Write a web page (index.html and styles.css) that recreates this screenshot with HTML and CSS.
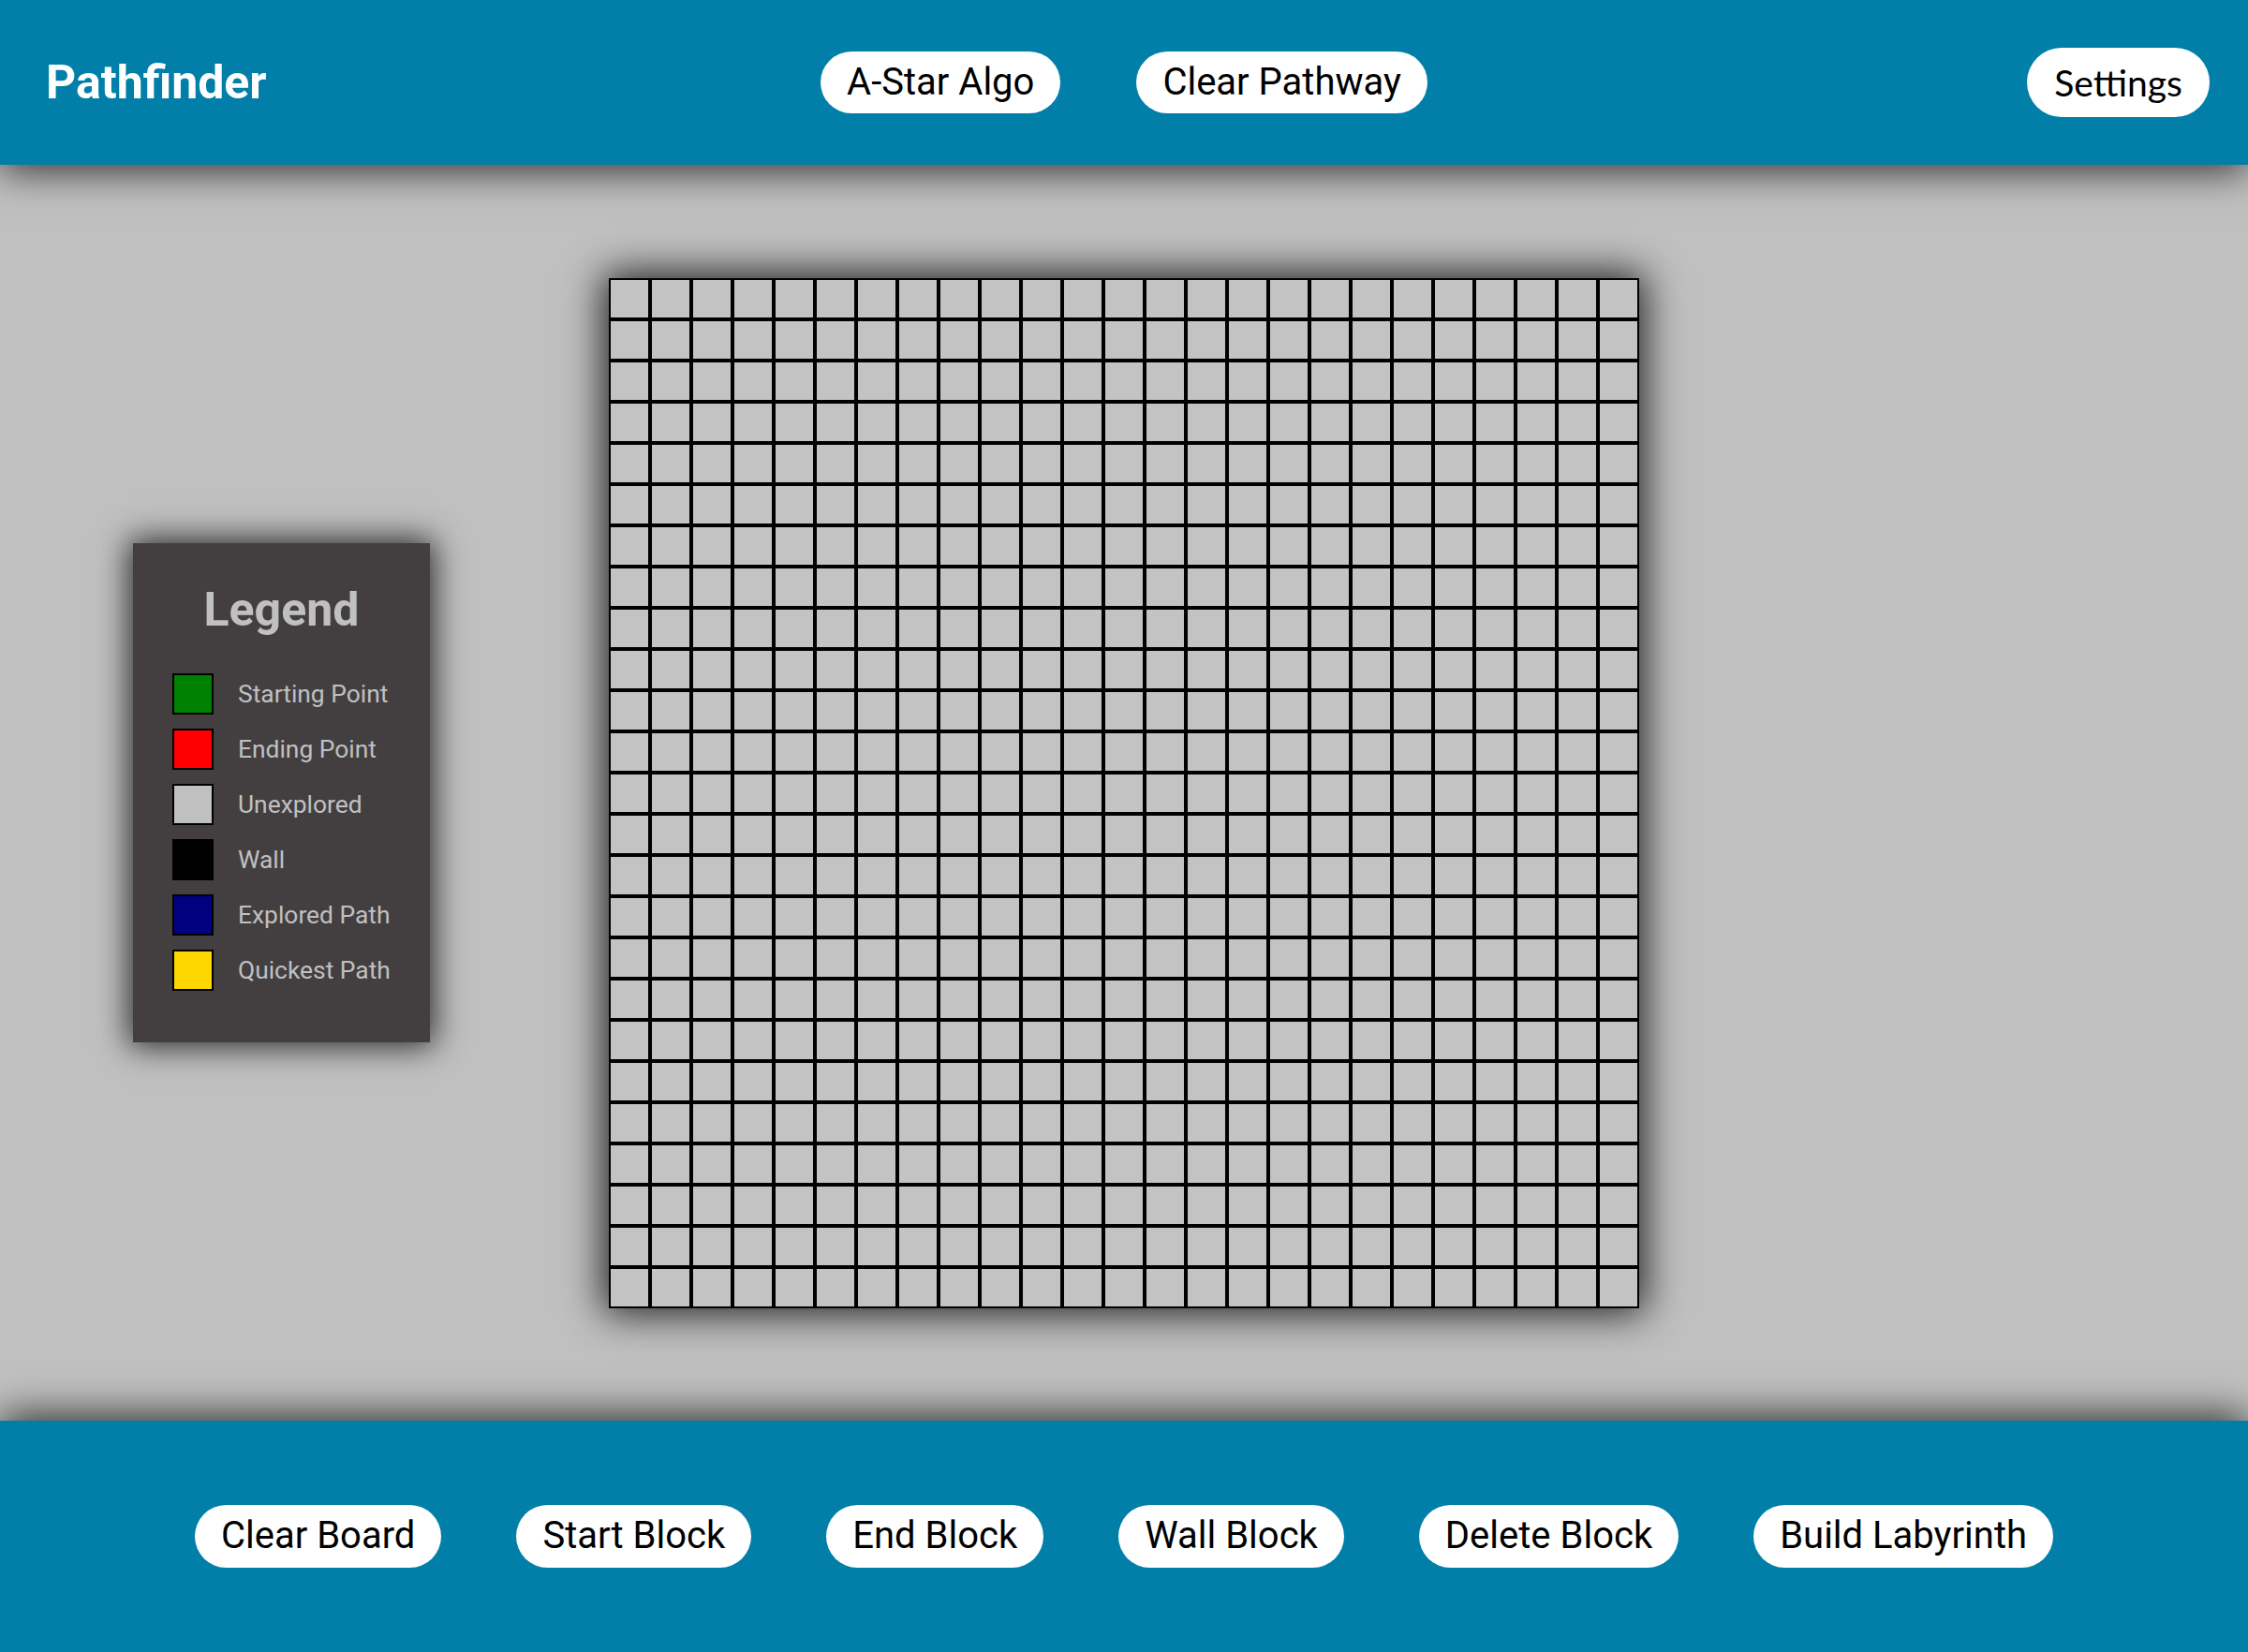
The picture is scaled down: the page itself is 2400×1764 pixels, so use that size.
FILE: index.html
```
<!DOCTYPE html>
<html lang="en">
<head>
<meta charset="utf-8">
<title>Pathfinder</title>
<link rel="stylesheet" href="styles.css">
</head>
<body>
<header class="topbar">
  <h1 class="logo">Pathfinder</h1>
  <nav class="top-actions">
    <button class="pill">A-Star Algo</button>
    <button class="pill">Clear Pathway</button>
  </nav>
  <div class="top-right">
    <button class="pill pill-settings">Settings</button>
  </div>
</header>
<main class="stage">
  <aside class="legend">
    <h2 class="legend-title">Legend</h2>
    <ul class="legend-list">
      <li class="legend-item"><span class="swatch sw-start"></span>Starting Point</li>
      <li class="legend-item"><span class="swatch sw-end"></span>Ending Point</li>
      <li class="legend-item"><span class="swatch sw-unexplored"></span>Unexplored</li>
      <li class="legend-item"><span class="swatch sw-wall"></span>Wall</li>
      <li class="legend-item"><span class="swatch sw-explored"></span>Explored Path</li>
      <li class="legend-item"><span class="swatch sw-quick"></span>Quickest Path</li>
    </ul>
  </aside>
  <div class="board" id="board"></div>
  <div class="spacer"></div>
</main>
<footer class="bottombar">
  <button class="pill">Clear Board</button>
  <button class="pill">Start Block</button>
  <button class="pill">End Block</button>
  <button class="pill">Wall Block</button>
  <button class="pill">Delete Block</button>
  <button class="pill">Build Labyrinth</button>
</footer>
<script src="script.js"></script>
</body>
</html>
```
FILE: styles.css
```
* { box-sizing: border-box; }
html, body { margin: 0; padding: 0; }
body {
  height: 100vh;
  display: flex;
  flex-direction: column;
  font-family: Roboto, "Liberation Sans", sans-serif;
  background: #c0c0c0;
  overflow: hidden;
}
.topbar {
  height: 176px;
  flex: 0 0 176px;
  background: #017fa8;
  display: grid;
  grid-template-columns: 1fr auto 1fr;
  align-items: center;
  padding: 0 41px;
  position: relative;
  z-index: 2;
  box-shadow: 0 6px 40px rgba(0,0,0,0.75);
}
.logo {
  margin: 0 0 0 8px;
  font-family: Roboto, sans-serif;
  font-weight: 700;
  font-size: 50px;
  color: #fff;
  line-height: 1.17;
}
.top-actions {
  display: flex;
  gap: 81px;
}
.top-right {
  display: flex;
  justify-content: flex-end;
}
.pill {
  font-family: Roboto, sans-serif;
  font-size: 40px;
  font-weight: 400;
  color: #000;
  background: #fff;
  border: none;
  border-radius: 40px;
  padding: 9.5px 28px;
  line-height: 1.172;
  cursor: pointer;
}
.pill-settings {
  font-family: Lato, "Open Sans", sans-serif;
  font-size: 39px;
  line-height: 1.2;
  padding: 14px 29px;
}
.stage {
  flex: 1 1 auto;
  display: grid;
  grid-template-columns: 1fr auto 1fr;
  align-items: center;
  background: #c0c0c0;
  position: relative;
  z-index: 1;
}
.legend {
  justify-self: start;
  margin-left: 142px;
  background: #433f41;
  padding: 42px 42px 55px;
  box-shadow: 0 0 32px 4px rgba(0,0,0,0.8);
}
.legend-title {
  margin: 0 0 38px;
  text-align: center;
  font-family: Roboto, sans-serif;
  font-weight: 700;
  font-size: 50px;
  line-height: 1.172;
  color: #c0c0c0;
}
.legend-list {
  list-style: none;
  margin: 0;
  padding: 0;
  display: flex;
  flex-direction: column;
  gap: 15px;
}
.legend-item {
  display: flex;
  align-items: center;
  gap: 26px;
  font-size: 26.4px;
  color: #c0c0c0;
  white-space: nowrap;
}
.swatch {
  width: 44px;
  height: 44px;
  border: 2px solid #000;
  flex: 0 0 44px;
}
.sw-start { background: #008000; }
.sw-end { background: #ff0000; }
.sw-unexplored { background: #c0c0c0; }
.sw-wall { background: #000; }
.sw-explored { background: #000080; }
.sw-quick { background: #ffd700; }
.board {
  display: grid;
  grid-template-columns: repeat(25, 44px);
  grid-template-rows: repeat(25, 44px);
  width: 1100px;
  height: 1100px;
  box-shadow: 0 0 40px 5px rgba(0,0,0,0.85);
  background: #c3c3c3;
}
.cell {
  width: 44px;
  height: 44px;
  border: 2px solid #000;
  background: #c3c3c3;
}
.bottombar {
  height: 247px;
  flex: 0 0 247px;
  background: #017fa8;
  display: flex;
  justify-content: center;
  align-items: center;
  gap: 80px;
  position: relative;
  z-index: 2;
  box-shadow: 0 -6px 40px rgba(0,0,0,0.75);
}
.bottombar .pill { padding: 10px 28px; }
```
FILE: script.js
```
(function () {
  var board = document.getElementById('board');
  var frag = document.createDocumentFragment();
  for (var i = 0; i < 625; i++) {
    var c = document.createElement('div');
    c.className = 'cell';
    frag.appendChild(c);
  }
  board.appendChild(frag);
})();
```
